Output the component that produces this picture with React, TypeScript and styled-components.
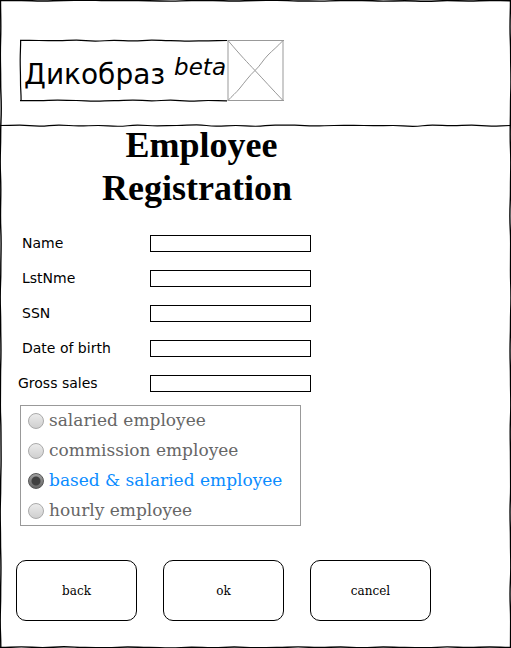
import React, { useState } from "react";
import styled, { createGlobalStyle, css } from "styled-components";

const GlobalStyle = createGlobalStyle`
  *, *::before, *::after { box-sizing: border-box; }
  body { margin: 0; background: #fff; color: #000; }
`;

const sans = `"DejaVu Sans", sans-serif`;
const serif = `"DejaVu Serif", serif`;

type Edge = "top" | "right" | "bottom" | "left";

const Page = styled.div`
  position: relative;
  display: flex;
  flex-direction: column;
  min-height: 100vh;
  overflow: hidden;
`;

const Header = styled.header`
  position: relative;
  display: flex;
  padding: 40px 20px 25px;
`;

const Brand = styled.div`
  position: relative;
  display: flex;
  align-items: flex-start;
  min-width: 207px;
  height: 61px;
  padding: 10px 0 0 4px;
  font-family: ${sans};
  font-size: 28px;
  line-height: 50px;
  white-space: pre;
`;

const Beta = styled.sup`
  padding-top: 5px;
  font-size: 23px;
  font-style: italic;
  line-height: 24px;
  vertical-align: baseline;
`;

const Placeholder = styled.svg`
  display: block;
  flex: none;
  width: 57px;
  height: 61px;
`;

const EdgeSvg = styled.svg<{ $edge: Edge }>`
  position: absolute;
  display: block;
  pointer-events: none;
  ${({ $edge }) =>
    $edge === "top" || $edge === "bottom"
      ? css`
          left: 0;
          width: 100%;
          height: 4px;
        `
      : css`
          top: 0;
          width: 4px;
          height: 100%;
        `}
  ${({ $edge }) => $edge}: -1px;
`;

/* Distance from the edge's centre line, sampled at even steps along it. */
const wobbles = {
  pageTop: [0, 0, 3, 0, -2, 1, 0, 2, 4, 1, 0, 3, 0, -1, 3, 4, 1, 0, 4, 2, 5, 1, 3, 0, 2],
  pageSide: [0, 2, -1, 1, 5, 1, -2, 2, 0, 4, 2, -2, 1, 3, 0, -1, 3, 4, 1, -2, 0, 3, 1, -2, 2],
  pageRight: [0, -3, 1, 3, 0, -2, 2, 0, -4, 1, 0, 3, 0, -3, 0, 2, -2, 0, 1, -3, 0, 2, -3, 1, 0],
  pageBottom: [0, -4, 1, -5, 0, 2, -3, 0, 3, -2, 2, -3, 1, 0, -4, 0, -3, 2, -3, 0, 2, -4, 0, -3, 0],
  rule: [0, -2, 4, -3, 3, 0, 5, -2, 2, 0, -4, 4, 0, 5, -3, -2, 3, 0, -1, 1, 0, 6, -3, 1, -2, 4, 0],
  boxTop: [-1, 0, 1, -2, 4, -1, 3, -2, 1, 4, 2, 0],
  boxBottom: [1, 1, -2, 0, 4, 1, -3, 2, -2, 4, 0, 2],
  boxLeft: [1, -2, 0, 4],
};

function Wobble({ edge, points, weight }: { edge: Edge; points: number[]; weight: number }) {
  const flat = edge === "top" || edge === "bottom";
  const centre = edge === "top" || edge === "left" ? 15 : 25;
  const step = 1000 / (points.length - 1);
  const place = (along: number, off: number) => {
    const across = centre + off * 1.5;
    return flat ? `${along} ${across}` : `${across} ${along}`;
  };
  let d = `M${place(0, points[0])}`;
  for (let i = 1; i < points.length; i++) {
    const mid = (i - 0.5) * step;
    d += `C${place(mid, points[i - 1])} ${place(mid, points[i])} ${place(i * step, points[i])}`;
  }
  return (
    <EdgeSvg
      $edge={edge}
      viewBox={flat ? "0 0 1000 40" : "0 0 40 1000"}
      preserveAspectRatio="none"
      aria-hidden="true"
    >
      <path d={d} fill="none" stroke="#000" strokeWidth={weight} vectorEffect="non-scaling-stroke" />
    </EdgeSvg>
  );
}

const Form = styled.form`
  display: flex;
  flex-direction: column;
  align-items: flex-start;
  padding-bottom: 27px;
`;

const Title = styled.h1`
  width: 394px;
  max-width: 100%;
  margin: -2px 0 0;
  font-family: "Liberation Serif", serif;
  font-size: 36px;
  font-weight: 700;
  line-height: 43px;
  text-align: center;
`;

const Fields = styled.div`
  display: grid;
  gap: 18px;
  padding: 25px 20px 0 18px;
`;

const Field = styled.div`
  display: grid;
  grid-template-columns: 132px minmax(0, 161px);
  align-items: center;
  height: 17px;
`;

const Label = styled.label<{ $indent: boolean }>`
  padding-left: ${({ $indent }) => ($indent ? 4 : 0)}px;
  font-family: ${sans};
  font-size: 14px;
  line-height: 17px;
`;

const TextBox = styled.input`
  width: 100%;
  height: 17px;
  padding: 0 4px;
  border: 1px solid #000;
  border-radius: 0;
  background: #fff;
  font-family: ${sans};
  font-size: 12px;
`;

const Options = styled.fieldset`
  display: grid;
  gap: 1px;
  width: 281px;
  max-width: 100%;
  margin: 13px 0 0 20px;
  padding: 0 0 0 7px;
  border: 1px solid #999;
`;

const Option = styled.label<{ $selected: boolean }>`
  display: flex;
  align-items: center;
  gap: 5px;
  height: 29px;
  color: ${({ $selected }) => ($selected ? "#0a8cff" : "#666")};
  font-family: ${serif};
  font-size: 17px;
  line-height: 29px;
  white-space: nowrap;
`;

const Radio = styled.input`
  appearance: none;
  flex: none;
  width: 16px;
  height: 16px;
  margin: 0;
  border: 1px solid #aaa;
  border-radius: 50%;
  background: linear-gradient(#ebebeb, #cfcfcf);

  &:checked {
    border-color: #555;
    background: radial-gradient(circle, #404040 4px, transparent 5px),
      linear-gradient(#a0a0a0, #666);
  }
`;

const Actions = styled.div`
  display: flex;
  gap: 26px;
  padding: 34px 16px 0;
`;

const ActionButton = styled.button`
  width: 121px;
  height: 61px;
  padding: 0;
  border: 1px solid #000;
  border-radius: 10px;
  background: #fff;
  color: #000;
  font-family: ${serif};
  font-size: 12px;
`;

const fields = [
  { id: "name", label: "Name", indent: true },
  { id: "last-name", label: "LstNme", indent: true },
  { id: "ssn", label: "SSN", indent: true },
  { id: "birth", label: "Date of birth", indent: true },
  { id: "sales", label: "Gross sales", indent: false },
];

const kinds = [
  "salaried employee",
  "commission employee",
  "based & salaried employee",
  "hourly employee",
];

export default function App() {
  const [kind, setKind] = useState(kinds[2]);

  return (
    <Page>
      <GlobalStyle />
      <Header>
        <Brand>
          <span>Дикобраз </span>
          <Beta>beta</Beta>
          <Wobble edge="top" points={wobbles.boxTop} weight={1.2} />
          <Wobble edge="bottom" points={wobbles.boxBottom} weight={1.2} />
          <Wobble edge="left" points={wobbles.boxLeft} weight={1.2} />
        </Brand>
        <Placeholder viewBox="0 0 57 61" fill="none" stroke="#999" aria-hidden="true">
          <path d="M1 0V61M56 0V61" stroke="#ccc" strokeWidth="2" />
          <path d="M1 .5H57M1 60.5H57" />
          <path d="M1 .5C15 17 20 22 28 30.5S45 49 56 60.5M56 .5C50 7 46 10 41 15S33 26 28 30.5 17 43 13 48 5 56 1 60.5" />
        </Placeholder>
        <Wobble edge="bottom" points={wobbles.rule} weight={1.2} />
      </Header>

      <Form onSubmit={(e) => e.preventDefault()}>
        <Title>
          &nbsp;Employee
          <br />
          Registration
        </Title>
        <Fields>
          {fields.map((f) => (
            <Field key={f.id}>
              <Label htmlFor={f.id} $indent={f.indent}>
                {f.label}
              </Label>
              <TextBox id={f.id} type="text" />
            </Field>
          ))}
        </Fields>
        <Options aria-label="Employee type">
          {kinds.map((k) => (
            <Option key={k} $selected={k === kind}>
              <Radio type="radio" name="kind" checked={k === kind} onChange={() => setKind(k)} />
              {k}
            </Option>
          ))}
        </Options>
        <Actions>
          <ActionButton type="button">back</ActionButton>
          <ActionButton type="submit">ok</ActionButton>
          <ActionButton type="button">cancel</ActionButton>
        </Actions>
      </Form>

      <Wobble edge="top" points={wobbles.pageTop} weight={1.4} />
      <Wobble edge="right" points={wobbles.pageRight} weight={1.4} />
      <Wobble edge="bottom" points={wobbles.pageBottom} weight={1.4} />
      <Wobble edge="left" points={wobbles.pageSide} weight={1.4} />
    </Page>
  );
}
